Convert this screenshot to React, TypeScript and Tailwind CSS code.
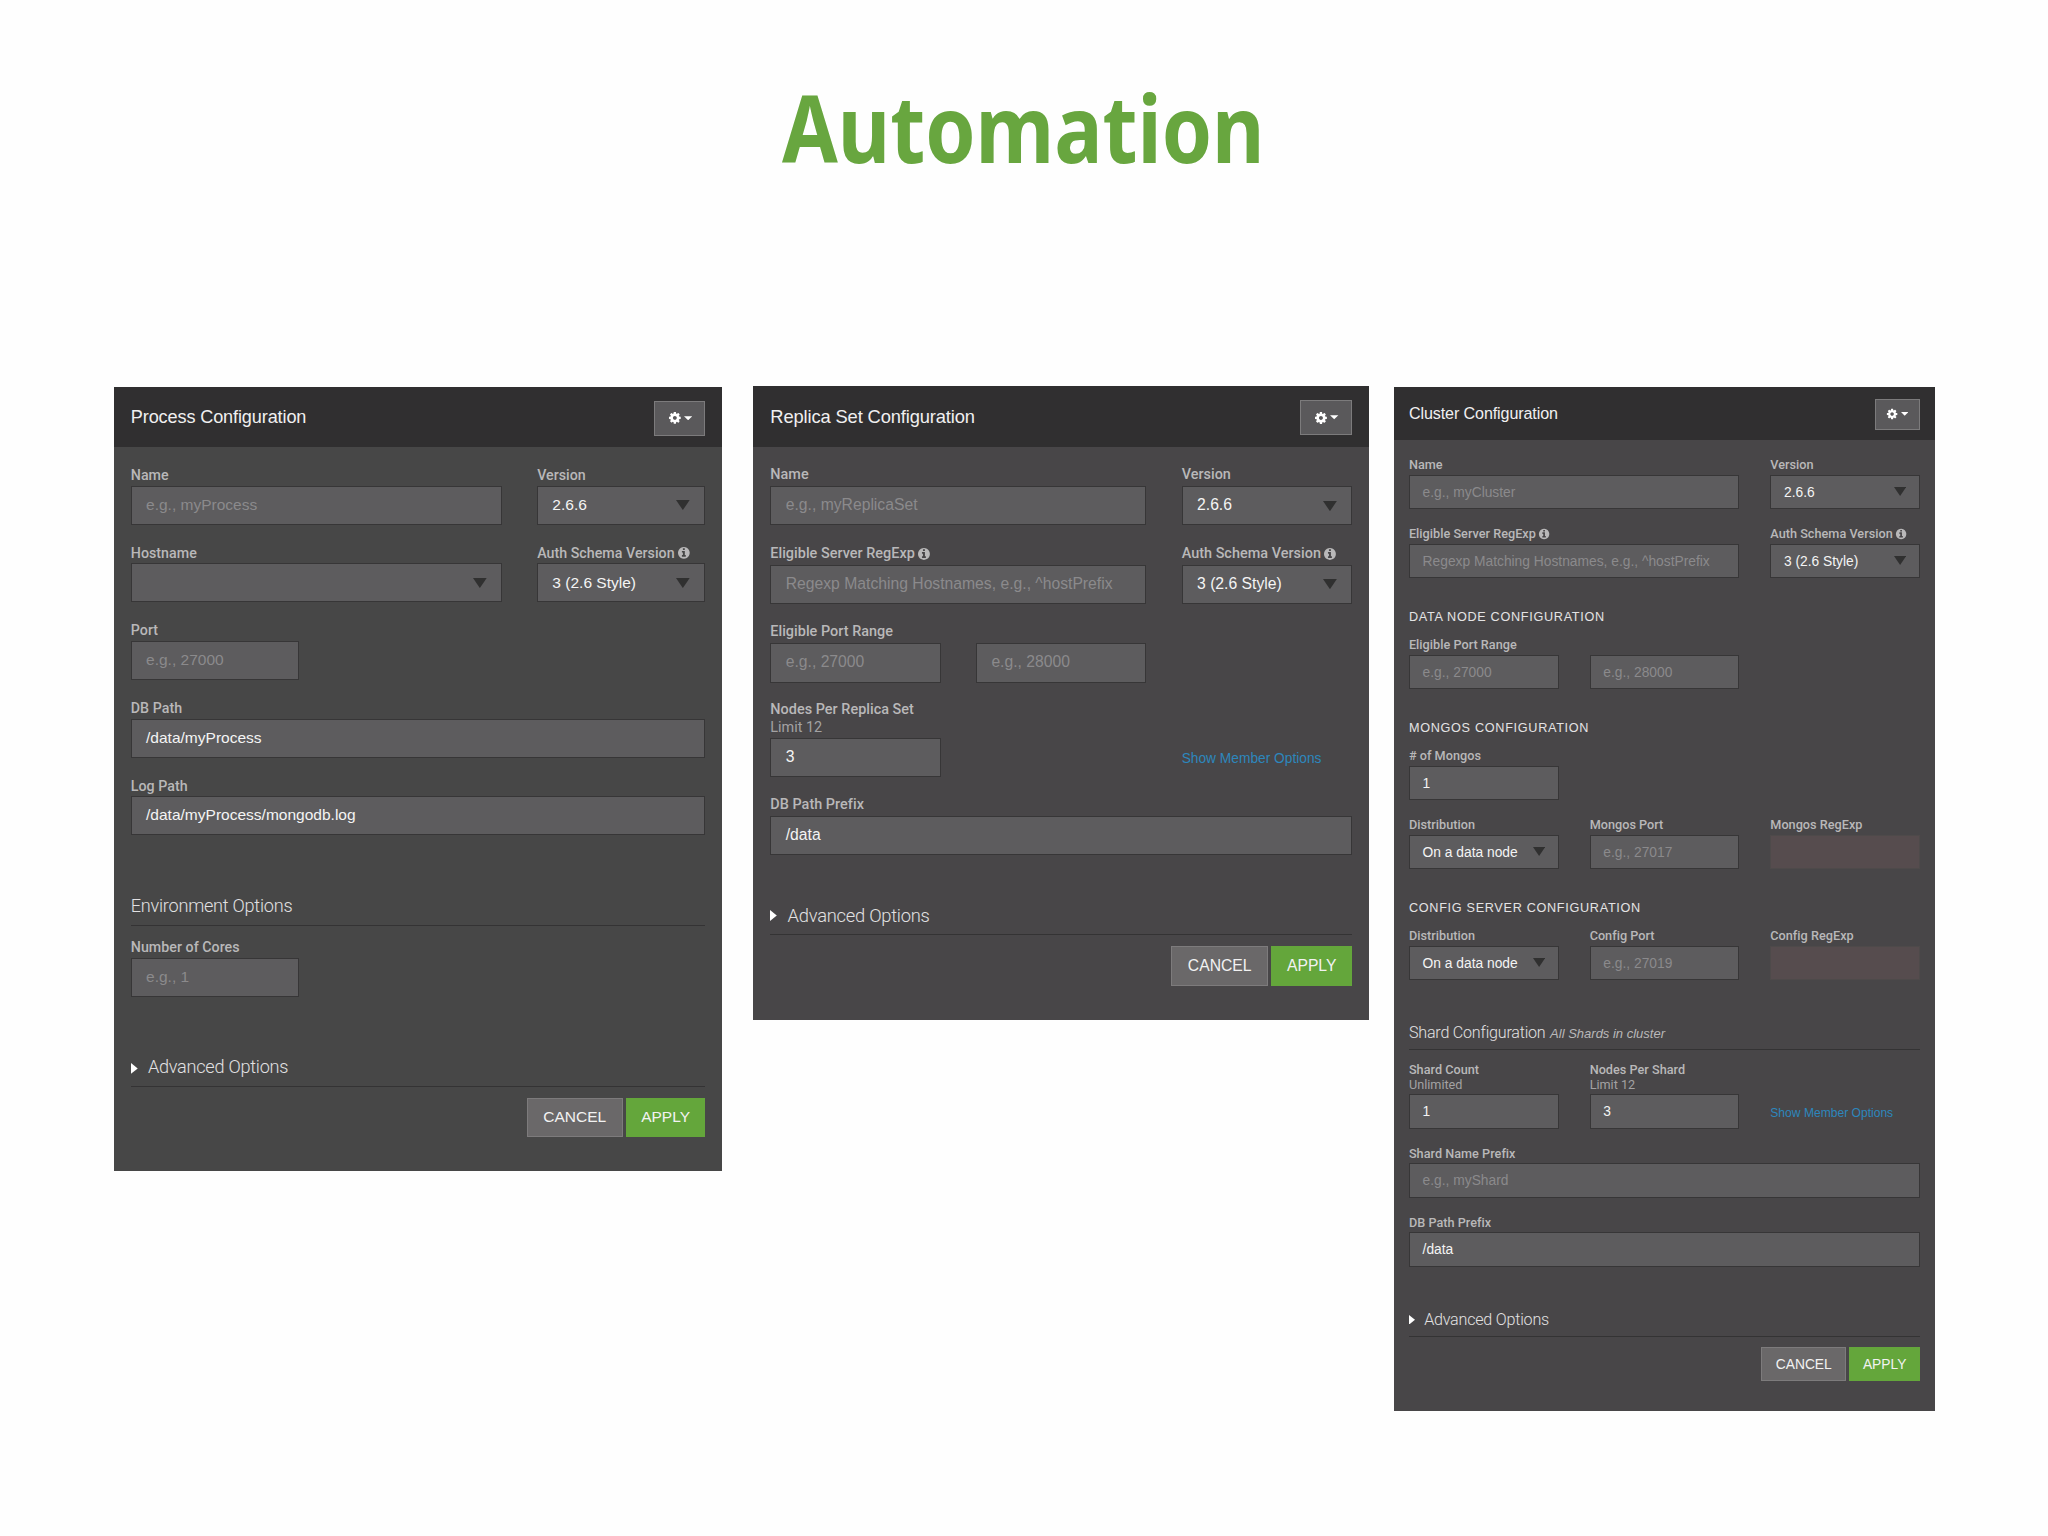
import type { ReactNode } from "react";
import clsx from "clsx";

const CogIcon = () => (
  <svg width="10.6" height="10.6" viewBox="0 0 1792 1792" fill="currentColor" aria-hidden="true">
    <path d="M1152 896q0-106-75-181t-181-75-181 75-75 181 75 181 181 75 181-75 75-181zm512-109v222q0 12-8 23t-20 13l-185 28q-19 54-39 91 35 50 107 138 10 12 10 25t-9 23q-27 37-99 108t-94 71q-12 0-26-9l-138-108q-44 23-91 38-16 136-29 186-7 28-36 28h-222q-14 0-24.5-8.5t-11.5-21.5l-28-184q-49-16-90-37l-141 107q-10 9-25 9-14 0-25-11-126-114-165-168-7-10-7-23 0-12 8-23 15-21 51-66.5t54-70.5q-27-50-41-99l-183-27q-13-2-21-12.5t-8-23.5v-222q0-12 8-23t19-13l186-28q14-46 39-92-40-57-107-138-10-12-10-24 0-10 9-23 26-36 98.5-107.5t94.5-71.5q13 0 26 10l138 107q44-23 91-38 16-136 29-186 7-28 36-28h222q14 0 24.5 8.5t11.5 21.5l28 184q49 16 90 37l142-107q9-9 24-9 13 0 25 10 129 119 165 170 7 8 7 22 0 12-8 23-15 21-51 66.5t-54 70.5q26 50 41 98l183 28q13 2 21 12.5t8 23.5z" />
  </svg>
);

const InfoIcon = () => (
  <svg className="mb-px" width="10.6" height="10.6" viewBox="0 0 1792 1792" fill="currentColor" aria-hidden="true">
    <path d="M1152 1376v-160q0-14-9-23t-23-9h-96v-512q0-14-9-23t-23-9h-320q-14 0-23 9t-9 23v160q0 14 9 23t23 9h96v320h-96q-14 0-23 9t-9 23v160q0 14 9 23t23 9h448q14 0 23-9t9-23zm-128-896v-160q0-14-9-23t-23-9h-192q-14 0-23 9t-9 23v160q0 14 9 23t23 9h192q14 0 23-9t9-23zm640 416q0 209-103 385.5t-279.5 279.5-385.5 103-385.5-103-279.5-279.5-103-385.5 103-385.5 279.5-279.5 385.5-103 385.5 103 279.5 279.5 103 385.5z" />
  </svg>
);

const SelectArrow = () => (
  <svg className="ml-auto" width="10.6" height="7.8" viewBox="0 0 10 8" preserveAspectRatio="none" fill="#303030" aria-hidden="true">
    <path d="M0 0h10L5 8z" />
  </svg>
);

type FieldProps = {
  label?: string;
  hint?: string;
  info?: boolean;
  value?: string;
  placeholder?: string;
  select?: boolean;
  disabled?: boolean;
  span?: 1 | 2 | 3;
};

const SPANS = { 1: "col-span-1", 2: "col-span-2", 3: "col-span-3" };

function Field({ label, hint, info, value, placeholder, select, disabled, span = 1 }: FieldProps) {
  return (
    <div className={SPANS[span]}>
      <div
        className={clsx(
          "flex items-center gap-[1.8px] whitespace-nowrap font-[Roboto,sans-serif] text-[11px] font-medium tracking-[0.02px] text-[#b9b8b9]",
          hint ? "h-3.5 leading-[14px]" : "h-4 leading-4",
        )}
      >
        {label}
        {info && <InfoIcon />}
      </div>
      {hint && (
        <div className="h-3.5 font-[Roboto,sans-serif] text-[11px] leading-[13px] text-[#a3a2a3]">{hint}</div>
      )}
      {disabled ? (
        <div className="h-[30px] border border-[#4e4a4a] bg-[#564c4e]" />
      ) : (
        <div className="flex h-[30px] items-center border border-[#373637] bg-[#5d5c5e] px-[11px] text-xs whitespace-nowrap text-[#f4f4f4]">
          {value ?? <span className="text-[#8b8a8c]">{placeholder}</span>}
          {select && <SelectArrow />}
        </div>
      )}
    </div>
  );
}

function Row({ children }: { children: ReactNode }) {
  return <div className="mb-3.5 grid grid-cols-[130px_130px_130px] items-end gap-x-[27px]">{children}</div>;
}

// Light heading with a rule below it
function Section({ title, note, roomy, arrow }: { title: string; note?: string; roomy?: boolean; arrow?: boolean }) {
  return (
    <div
      className={clsx(
        "flex items-end border-b border-[#343334] pb-1 text-sm leading-5 text-[#e2e1e2]",
        roomy ? "h-14" : "h-[47px]",
      )}
    >
      {arrow && (
        <svg className="mr-2 mb-[6px] text-white" width="5.2" height="8.4" viewBox="0 0 5 8" fill="currentColor" aria-hidden="true">
          <path d="M0 0l5 4-5 4z" />
        </svg>
      )}
      <p>
        <span className="font-[Roboto,sans-serif] font-light tracking-[-0.19px]">{title}</span>
        {note && <em className="ml-1 text-[11.3px] text-[#b9b8b9]">{note}</em>}
      </p>
    </div>
  );
}

function SubHeading({ children }: { children: ReactNode }) {
  return (
    <h3 className="h-[36.5px] pt-[12.3px] text-[11px] leading-4 tracking-[0.6px] whitespace-nowrap text-[#e4e3e4]">{children}</h3>
  );
}

function MemberLink() {
  return (
    <a className="col-start-3 mb-[5px] text-[10.5px] leading-4 whitespace-nowrap text-[#2d86bd]">Show Member Options</a>
  );
}

function Panel({ title, scale, tone, children }: { title: string; scale: string; tone: string; children: ReactNode }) {
  return (
    <section className={clsx("w-[470px] font-['Liberation_Sans',Arial,sans-serif]", scale, tone)}>
      <header className="flex h-[46.4px] items-center justify-between bg-[#302f30] px-[13px]">
        <h2 className="pt-[1.2px] text-sm tracking-[-0.1px] text-[#f0f0f0]">{title}</h2>
        <button className="mt-[2px] flex h-[27px] w-[39.5px] items-center justify-center gap-[2px] border border-[#7c7b7c] bg-[#5a595b] text-white">
          <CogIcon />
          <svg width="6.4" height="3.4" viewBox="0 0 6 3" fill="currentColor" aria-hidden="true">
            <path d="M0 0h6L3 3z" />
          </svg>
        </button>
      </header>
      <div className="px-[13px] pt-3.5 pb-[26px]">
        {children}
        <div className="mt-[8.5px] flex justify-end gap-[2.5px] text-xs text-[#f2f2f2]">
          <button className="h-[30px] w-[74px] border border-[#7d7b7c] bg-[#6a6869]">CANCEL</button>
          <button className="h-[30px] w-[61.5px] bg-[#64a63b]">APPLY</button>
        </div>
      </div>
    </section>
  );
}

export default function App() {
  return (
    <main className="h-[1536px] w-[2048px] overflow-hidden bg-[#fefefe]">
      <div className="flex h-[386px] justify-center pt-[62.5px] pr-[2px]">
        <h1 className="h-[128px] origin-center scale-x-[0.858] font-['Noto_Sans',sans-serif] text-[94px] leading-[128px] font-bold text-[#68a63f]">
          Automation
        </h1>
      </div>

      <div className="flex items-start">
        <div className="mt-[1px] ml-[114px] w-[639.3px]">
          <Panel title="Process Configuration" scale="[zoom:1.294]" tone="bg-[#474747]">
            <Row>
              <Field span={2} label="Name" placeholder="e.g., myProcess" />
              <Field label="Version" value="2.6.6" select />
            </Row>
            <Row>
              <Field span={2} label="Hostname" value="" select />
              <Field label="Auth Schema Version" info value="3 (2.6 Style)" select />
            </Row>
            <Row>
              <Field label="Port" placeholder="e.g., 27000" />
            </Row>
            <Row>
              <Field span={3} label="DB Path" value="/data/myProcess" />
            </Row>
            <Row>
              <Field span={3} label="Log Path" value="/data/myProcess/mongodb.log" />
            </Row>
            <Section roomy title="Environment Options" />
            <div className="h-[9px]" />
            <Row>
              <Field label="Number of Cores" placeholder="e.g., 1" />
            </Row>
            <Section roomy arrow title="Advanced Options" />
          </Panel>
        </div>

        <div className="w-[640.7px]">
          <Panel title="Replica Set Configuration" scale="[zoom:1.31]" tone="bg-[#484648]">
            <Row>
              <Field span={2} label="Name" placeholder="e.g., myReplicaSet" />
              <Field label="Version" value="2.6.6" select />
            </Row>
            <Row>
              <Field span={2} label="Eligible Server RegExp" info placeholder="Regexp Matching Hostnames, e.g., ^hostPrefix" />
              <Field label="Auth Schema Version" info value="3 (2.6 Style)" select />
            </Row>
            <Row>
              <Field label="Eligible Port Range" placeholder="e.g., 27000" />
              <Field placeholder="e.g., 28000" />
            </Row>
            <Row>
              <Field label="Nodes Per Replica Set" hint="Limit 12" value="3" />
              <MemberLink />
            </Row>
            <Row>
              <Field span={3} label="DB Path Prefix" value="/data" />
            </Row>
            <Section arrow title="Advanced Options" />
          </Panel>
        </div>

        <div className="mt-[0.6px]">
          <Panel title="Cluster Configuration" scale="[zoom:1.151]" tone="bg-[#484648]">
            <Row>
              <Field span={2} label="Name" placeholder="e.g., myCluster" />
              <Field label="Version" value="2.6.6" select />
            </Row>
            <Row>
              <Field span={2} label="Eligible Server RegExp" info placeholder="Regexp Matching Hostnames, e.g., ^hostPrefix" />
              <Field label="Auth Schema Version" info value="3 (2.6 Style)" select />
            </Row>
            <SubHeading>DATA NODE CONFIGURATION</SubHeading>
            <Row>
              <Field label="Eligible Port Range" placeholder="e.g., 27000" />
              <Field placeholder="e.g., 28000" />
            </Row>
            <SubHeading>MONGOS CONFIGURATION</SubHeading>
            <Row>
              <Field label="# of Mongos" value="1" />
            </Row>
            <Row>
              <Field label="Distribution" value="On a data node" select />
              <Field label="Mongos Port" placeholder="e.g., 27017" />
              <Field label="Mongos RegExp" disabled />
            </Row>
            <SubHeading>CONFIG SERVER CONFIGURATION</SubHeading>
            <Row>
              <Field label="Distribution" value="On a data node" select />
              <Field label="Config Port" placeholder="e.g., 27019" />
              <Field label="Config RegExp" disabled />
            </Row>
            <Section title="Shard Configuration" note="All Shards in cluster" />
            <div className="h-[10px]" />
            <Row>
              <Field label="Shard Count" hint="Unlimited" value="1" />
              <Field label="Nodes Per Shard" hint="Limit 12" value="3" />
              <MemberLink />
            </Row>
            <Row>
              <Field span={3} label="Shard Name Prefix" placeholder="e.g., myShard" />
            </Row>
            <Row>
              <Field span={3} label="DB Path Prefix" value="/data" />
            </Row>
            <Section arrow title="Advanced Options" />
          </Panel>
        </div>
      </div>
    </main>
  );
}
